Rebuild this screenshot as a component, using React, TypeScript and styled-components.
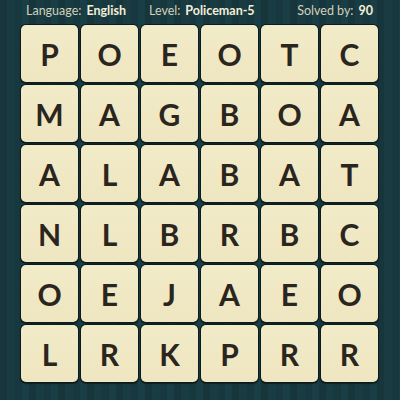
import React from "react";
import styled, { createGlobalStyle } from "styled-components";

const Global = createGlobalStyle`
  html, body { margin: 0; padding: 0; }
  body {
    width: 400px;
    height: 400px;
    overflow: hidden;
    font-family: "Lato", "Open Sans", sans-serif;
  }
`;

const Page = styled.div`
  width: 400px;
  height: 400px;
  box-sizing: border-box;
  background-color: #173a40;
  background-image: repeating-linear-gradient(
    90deg,
    #16363c 0px,
    #16363c 7px,
    #193c43 7px,
    #193c43 15px,
    #17383e 15px,
    #17383e 22px,
    #1a3e45 22px,
    #1a3e45 29px
  );
  display: flex;
  flex-direction: column;
`;

const Header = styled.div`
  height: 25px;
  box-sizing: border-box;
  padding: 0 27px 2px 26px;
  display: flex;
  align-items: center;
  gap: 23px;
  font-size: 12.5px;
  line-height: 1;
`;

const Stat = styled.div<{ $push?: boolean }>`
  display: flex;
  gap: 5px;
  white-space: nowrap;
  margin-left: ${(p) => (p.$push ? "auto" : "0")};
`;

const Label = styled.span`
  color: #d3d0bb;
  font-weight: 400;
`;

const Value = styled.span`
  color: #f4efd8;
  font-weight: 700;
`;

const Board = styled.div`
  display: grid;
  grid-template-columns: repeat(6, 57px);
  grid-auto-rows: 57px;
  gap: 3px;
  padding-left: 21px;
`;

const Tile = styled.div`
  box-sizing: border-box;
  border-radius: 5px;
  background: linear-gradient(180deg, #f2ebc8 0%, #eee6c0 100%);
  box-shadow: 0 0 0 1px #0c1b1e, 0 1px 1px 1px rgba(0, 0, 0, 0.45);
  display: flex;
  align-items: center;
  justify-content: center;
  color: #2b2520;
  font-family: "Lato", sans-serif;
  font-weight: 700;
  font-size: 30px;
  padding-top: 1px;
`;

const rows = ["POEOTC", "MAGBOA", "ALABAT", "NLBRBC", "OEJAEO", "LRKPRR"];

export default function App() {
  return (
    <Page>
      <Global />
      <Header>
        <Stat>
          <Label>Language:</Label>
          <Value>English</Value>
        </Stat>
        <Stat>
          <Label>Level:</Label>
          <Value>Policeman-5</Value>
        </Stat>
        <Stat $push>
          <Label>Solved by:</Label>
          <Value>90</Value>
        </Stat>
      </Header>
      <Board>
        {rows.flatMap((r, i) =>
          r.split("").map((ch, j) => <Tile key={`${i}-${j}`}>{ch}</Tile>)
        )}
      </Board>
    </Page>
  );
}
